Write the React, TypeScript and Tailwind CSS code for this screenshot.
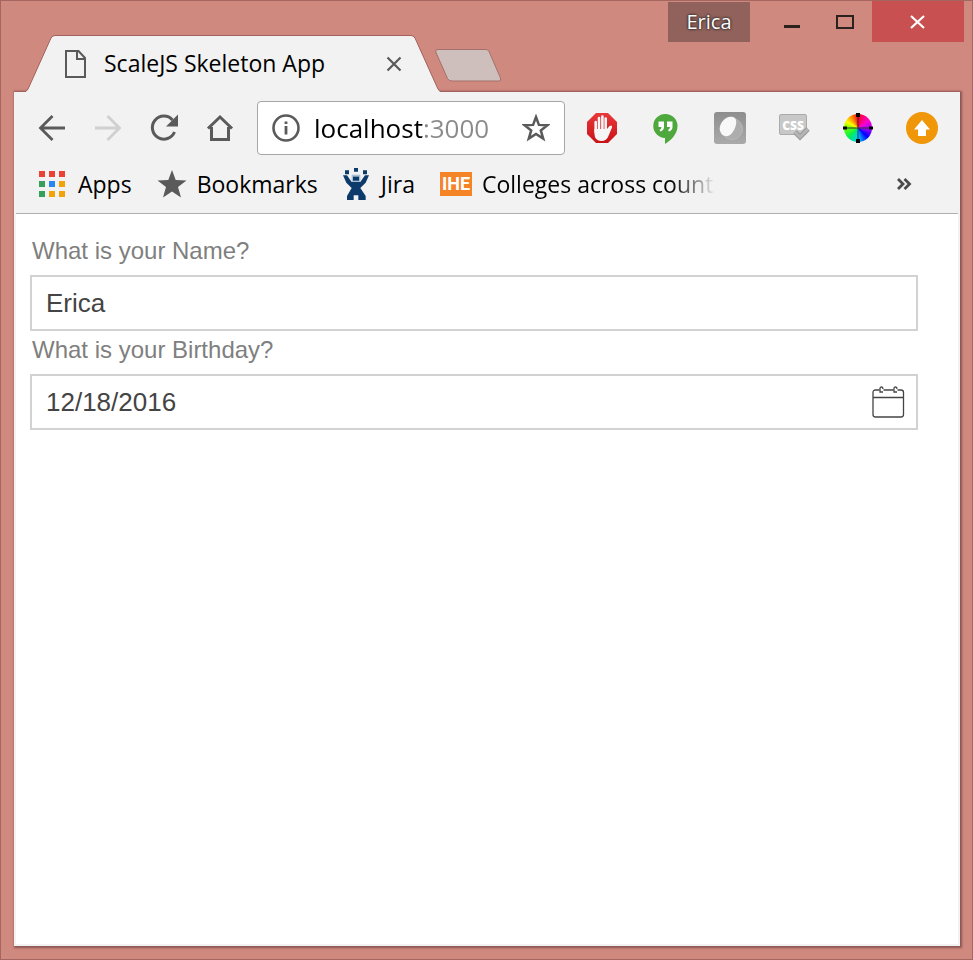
import React from "react";

const UI = "font-['Open_Sans','Noto_Sans',sans-serif]";

function TabStrip() {
  return (
    <div className="relative z-10 -mb-px flex pt-[34px] pl-[25px]">
      <div className="relative h-[57px] w-[414px]">
        <svg className="absolute inset-0" width="414" height="57" viewBox="0 0 414 57" aria-hidden="true">
          <path d="M-2 57 Q1 56.500 2.500 53 L25 3 Q26.500 .5 29 .5 H385 Q387.500 .5 389 3 L411.500 53 Q413 56.500 415 57 Z" fill="#f2f2f2" />
          <path d="M-1 56.500 Q1.500 56 2.500 53 L25 3 Q26.500 .5 29 .5 H385 Q387.500 .5 389 3 L411.500 53 Q413 56.500 415 56.500" fill="none" stroke="#a3615c" />
        </svg>
        <div className="relative flex h-full items-center pr-[38px] pl-[39px]">
          <svg width="22" height="28" viewBox="0 0 22 28" fill="none" stroke="#5a5a5a" strokeWidth="2" aria-hidden="true">
            <path d="M1 1 H13.500 L20 8 V27 H1 Z M12 1 V9 H20" />
          </svg>
          <span className="ml-[17px] flex-1 text-[23px] whitespace-nowrap text-black">ScaleJS Skeleton App</span>
          <button aria-label="Close tab">
            <svg width="16" height="16" viewBox="0 0 16 16" stroke="#5a5a5a" strokeWidth="2.200" aria-hidden="true">
              <path d="M1.500 1.500 L14.500 14.500 M14.500 1.500 L1.500 14.500" />
            </svg>
          </button>
        </div>
      </div>
      <button aria-label="New tab" className="mt-[14px] -ml-[5px] self-start">
        <svg width="67" height="33" viewBox="0 0 67 33" aria-hidden="true">
          <path d="M3 .5 H51 Q53 .5 54 2.500 L65.500 29 Q66.500 32 64 32 H17 Q14 32 12.500 29.500 L.8 3 Q0 .5 3 .5 Z" fill="#cfbfbc" stroke="#a3706b" />
        </svg>
      </button>
    </div>
  );
}

function WindowControls() {
  return (
    <div className="flex h-[41px] pr-2">
      <button className="mt-px mr-[15px] w-[82px] bg-[#90625b] text-xl text-white [text-shadow:0_0_3px_#222,0_0_2px_#222]">Erica</button>
      <button aria-label="Minimize" className="flex w-[54px] items-center justify-center">
        <svg width="16" height="16" viewBox="0 0 16 16" aria-hidden="true"><path d="M0 11 H16 V14 H0 Z" fill="#2b211f" /></svg>
      </button>
      <button aria-label="Maximize" className="flex w-[53px] items-center justify-center pr-[2px]">
        <svg width="18" height="14" viewBox="0 0 18 14" aria-hidden="true"><rect x="1" y="1" width="16" height="12" fill="none" stroke="#2b211f" strokeWidth="2" /></svg>
      </button>
      <button aria-label="Close" className="flex w-[92px] items-center justify-center bg-[#c85050] pr-[2px]">
        <svg width="15" height="14" viewBox="0 0 15 14" stroke="#fff" strokeWidth="2.200" aria-hidden="true"><path d="M1 1 L14 13 M14 1 L1 13" /></svg>
      </button>
    </div>
  );
}

function NavButtons() {
  return (
    <div className="flex gap-7">
      <button aria-label="Back">
        <svg width="28" height="28" viewBox="0 0 28 28" fill="none" stroke="#5a5a5a" strokeWidth="2.800" aria-hidden="true"><path d="M27 14 H3 M14.500 2 L2.500 14 L14.500 26" /></svg>
      </button>
      <button aria-label="Forward">
        <svg width="28" height="28" viewBox="0 0 28 28" fill="none" stroke="#d0d0d0" strokeWidth="2.800" aria-hidden="true"><path d="M1 14 H25 M13.500 2 L25.500 14 L13.500 26" /></svg>
      </button>
      <button aria-label="Reload">
        <svg width="28" height="28" viewBox="0 0 28 28" aria-hidden="true">
          <path d="M22.500 6 A11.500 11.500 0 1 0 24.500 18" fill="none" stroke="#5a5a5a" strokeWidth="3" />
          <path d="M28 .5 V12.500 H16 Z" fill="#5a5a5a" />
        </svg>
      </button>
      <button aria-label="Home">
        <svg width="28" height="28" viewBox="0 0 28 28" fill="none" stroke="#5a5a5a" strokeWidth="3" aria-hidden="true"><path d="M2 14.500 L14 3 L26 14.500 M5.500 13 V25.500 H22.500 V13" /></svg>
      </button>
    </div>
  );
}

function Extensions() {
  return (
    <div className="flex gap-8">
      <button aria-label="AdBlock">
        <svg width="32" height="32" viewBox="0 0 32 32" aria-hidden="true">
          <defs><linearGradient id="stop-sign" x2="0" y2="1"><stop stopColor="#e8393a" /><stop offset="1" stopColor="#c91216" /></linearGradient></defs>
          <path d="M10 1 H22 L31 10 V22 L22 31 H10 L1 22 V10 Z" fill="url(#stop-sign)" />
          <g stroke="#f6f6f6" strokeWidth="2.600" strokeLinecap="round">
            <path d="M9.700 10 V20 M13 6 V18 M16.400 4.500 V18 M19.700 6.500 V18" />
          </g>
          <path d="M8.400 17 H21 L23.500 14 Q26.500 12.500 26 15.500 L22 25 Q20 29 15.500 29 Q8.400 29 8.400 21 Z" fill="#f6f6f6" />
        </svg>
      </button>
      <button aria-label="Hangouts">
        <svg width="32" height="32" viewBox="0 0 32 32" aria-hidden="true">
          <path d="M15.500 2 A12 12 0 0 1 27.500 14 C27.500 22 21 28.500 15 32 V26 A12 12 0 0 1 15.500 2 Z" fill="#4fa83d" />
          <path d="M8.500 9.500 H14 V15 Q14 18 10.500 19.500 L9.500 18 Q11.500 17 11.500 15 H8.500 Z M17 9.500 H22.500 V15 Q22.500 18 19 19.500 L18 18 Q20 17 20 15 H17 Z" fill="#fff" />
        </svg>
      </button>
      <button aria-label="Proxy">
        <svg width="32" height="32" viewBox="0 0 32 32" aria-hidden="true">
          <defs>
            <linearGradient id="tile" x2="0" y2="1"><stop stopColor="#8e8e8e" /><stop offset="1" stopColor="#aaa" /></linearGradient>
          </defs>
          <rect width="32" height="32" rx="3" fill="url(#tile)" />
          <circle cx="18" cy="17" r="10.500" fill="#adadad" stroke="#b8b8b8" />
          <path d="M19 5 C24 6 23 15 18 21 C14 26 8 25 6 19 C4 12 12 3 19 5 Z" fill="#f8f8f8" />
        </svg>
      </button>
      <button aria-label="CSS validator">
        <svg width="32" height="32" viewBox="0 0 32 32" aria-hidden="true">
          <rect x="1.500" y="2.500" width="27" height="20" rx="1.500" fill="#c8c8c8" stroke="#ababab" />
          <text x="15" y="17.500" textAnchor="middle" fill="#fff" fontFamily="Open Sans" fontWeight="800" fontSize="12">CSS</text>
          <path d="M17 20 L22 25 L30 17" fill="none" stroke="#999" strokeWidth="5" />
          <path d="M17 20 L22 25 L30 17" fill="none" stroke="#b5b5b5" strokeWidth="3" />
        </svg>
      </button>
      <button aria-label="Color picker" className="relative flex h-8 w-8 items-center justify-center">
        <span className="h-7 w-7 rounded-full bg-[conic-gradient(#f02,#f0c_15%,#90f_27%,#00f_37%,#0cf_50%,#0e5_62%,#6f0_75%,#ff0_83%,#f80_92%,#f02)]" />
        <svg className="absolute inset-0" width="32" height="32" viewBox="0 0 32 32" aria-hidden="true">
          <path d="M16 3 V29 M3 16 H29" stroke="#333" strokeWidth="1" />
          <path d="M14 1 H18 V5 H14 Z M14 27 H18 V31 H14 Z M1 14.500 H5 V17.500 H1 Z M27 14.500 H31 V17.500 H27 Z" fill="#000" />
        </svg>
      </button>
      <button aria-label="Update available">
        <svg width="32" height="32" viewBox="0 0 32 32" aria-hidden="true"><circle cx="16" cy="16" r="16" fill="#f09609" /><path d="M16 8 L24 17.500 H20 V24 H12 V17.500 H8 Z" fill="#fff" /></svg>
      </button>
    </div>
  );
}

function Toolbar() {
  return (
    <div className="flex items-center pt-[9px] pr-5 pl-[22px]">
      <NavButtons />
      <div className="mr-[21px] ml-[23px] flex h-[54px] min-w-0 flex-1 items-center rounded-[4px] border border-[#a6a6a6] bg-white px-[14px]">
        <svg className="shrink-0" width="28" height="28" viewBox="0 0 28 28" fill="none" stroke="#5a5a5a" aria-hidden="true">
          <circle cx="14" cy="14" r="12.500" strokeWidth="2.600" /><path d="M14 12 V20.500 M14 7.500 V10" strokeWidth="2.800" />
        </svg>
        <input
          aria-label="Address"
          defaultValue="localhost:3000"
          className="ml-[14px] min-w-0 flex-1 bg-[linear-gradient(90deg,#000_109px,#8a8a8a_109px)] bg-clip-text text-[26px] text-transparent outline-none"
        />
        <button aria-label="Bookmark this page">
          <svg width="28" height="28" viewBox="0 0 28 28" aria-hidden="true"><path d="M14 3 L16.900 10.900 L25.500 11.200 L18.800 16.400 L21.200 24.600 L14 19.900 L6.800 24.600 L9.200 16.400 L2.500 11.200 L11.100 10.900 Z" fill="none" stroke="#5a5a5a" strokeWidth="2.500" /></svg>
        </button>
      </div>
      <Extensions />
    </div>
  );
}

const APP_COLORS = ["#ea4335", "#ea4335", "#ea4335", "#34a05a", "#2b87f0", "#f0a30a", "#34a05a", "#f0a30a", "#f0a30a"];

function Bookmarks() {
  return (
    <nav aria-label="Bookmarks" className="flex h-[59px] items-center border-b border-[#b0b0b0] pr-[46px] pl-[22px] text-[23px] whitespace-nowrap text-black">
      <a href="#apps" className="flex items-center gap-3">
        <svg width="28" height="28" viewBox="0 0 28 28" aria-hidden="true">
          {APP_COLORS.map((color, i) => (
            <rect key={i} x={1 + (i % 3) * 10} y={1 + Math.floor(i / 3) * 10} width="6" height="6" fill={color} />
          ))}
        </svg>
        Apps
      </a>
      <a href="#bookmarks" className="ml-[25px] flex items-center gap-[10px]">
        <svg width="30" height="30" viewBox="0 0 30 30" aria-hidden="true"><path d="M15 1 L18.700 11 L29.500 11.400 L21 18 L24 28.500 L15 22.500 L6 28.500 L9 18 L.5 11.400 L11.300 11 Z" fill="#5a5a5a" /></svg>
        Bookmarks
      </a>
      <a href="#jira" className="ml-[25px] flex items-center gap-[10px]">
        <svg width="28" height="32" viewBox="0 0 84 96" fill="#0b3a6b" aria-hidden="true">
          <path d="M6 7 H18 V19 H6 Z M33 0 H45 V11 H33 Z M60 7 H72 V19 H60 Z" />
          <path d="M26 20 H52 V44 H26 Z" fill="#a9bfd3" />
          <path d="M30 26 H48 V38 H30 Z" />
          <path d="M0 22 H12 L26 42 H52 L66 22 H78 L68 44 L52 60 L68 84 V96 H46 V82 H32 V96 H12 V84 L26 60 L10 44 Z" />
        </svg>
        Jira
      </a>
      <a href="#colleges" className="ml-[25px] flex min-w-0 items-center gap-[10px]">
        <span className="flex h-6 w-8 shrink-0 items-center justify-center bg-[#f58427] font-[Roboto,sans-serif] text-lg leading-none font-bold text-white">IHE</span>
        <span className="w-[236px] overflow-hidden [mask-image:linear-gradient(90deg,#000_80%,transparent_99%)]">Colleges across country</span>
      </a>
      <button aria-label="More bookmarks" className="ml-auto">
        <svg width="16" height="14" viewBox="0 0 16 14" fill="none" stroke="#4a4a4a" strokeWidth="2.800" aria-hidden="true"><path d="M2 2 L7 7 L2 12 M8.500 2 L13.500 7 L8.500 12" /></svg>
      </button>
    </nav>
  );
}

function Form() {
  return (
    <form className="flex-1 bg-white pt-[18px] pr-10 pl-[14px] font-['Liberation_Sans',Arial,sans-serif]">
      <label htmlFor="name" className="block pb-[5px] pl-[2px] text-2xl leading-[38px] text-[#7f7f7f]">What is your Name?</label>
      <input id="name" defaultValue="Erica" className="block h-14 w-full border-2 border-[#d2d2d2] bg-white px-[14px] text-[26px] text-[#444] outline-none" />
      <label htmlFor="birthday" className="block pb-[5px] pl-[2px] text-2xl leading-[38px] text-[#7f7f7f]">What is your Birthday?</label>
      <div className="flex h-14 items-center border-2 border-[#d2d2d2] pr-[11px] pl-[14px]">
        <input id="birthday" defaultValue="12/18/2016" className="min-w-0 flex-1 bg-white text-[26px] text-[#444] outline-none" />
        <button type="button" aria-label="Open calendar">
          <svg width="33" height="33" viewBox="0 0 33 33" fill="none" stroke="#444" strokeWidth="1.300" aria-hidden="true">
            <path d="M7.500 4 H3.500 Q1 4 1 6.500 V28.500 Q1 31 3.500 31 H29 Q31.500 31 31.500 28.500 V6.500 Q31.500 4 29 4 H25.500 M11.500 4 H21.500 M1 11.500 H31.500" />
            <path d="M11 6 H8 V2.500 Q8 1 9.500 1 Q11 1 11 3 M25 6 H22 V2.500 Q22 1 23.500 1 Q25 1 25 3" />
          </svg>
        </button>
      </div>
    </form>
  );
}

export default function App() {
  return (
    <div className={`flex min-h-screen flex-col border border-[#a5665f] bg-[#d0897f] ${UI}`}>
      <header className="flex items-start justify-between">
        <TabStrip />
        <WindowControls />
      </header>
      <main className="mr-3 mb-[13px] ml-[13px] flex flex-1 flex-col border-t border-[#a3615c] bg-[#f2f2f2] px-[2px] pb-[2px] shadow-[1px_1px_2px_1px_#8b5553]">
        <Toolbar />
        <Bookmarks />
        <Form />
      </main>
    </div>
  );
}
